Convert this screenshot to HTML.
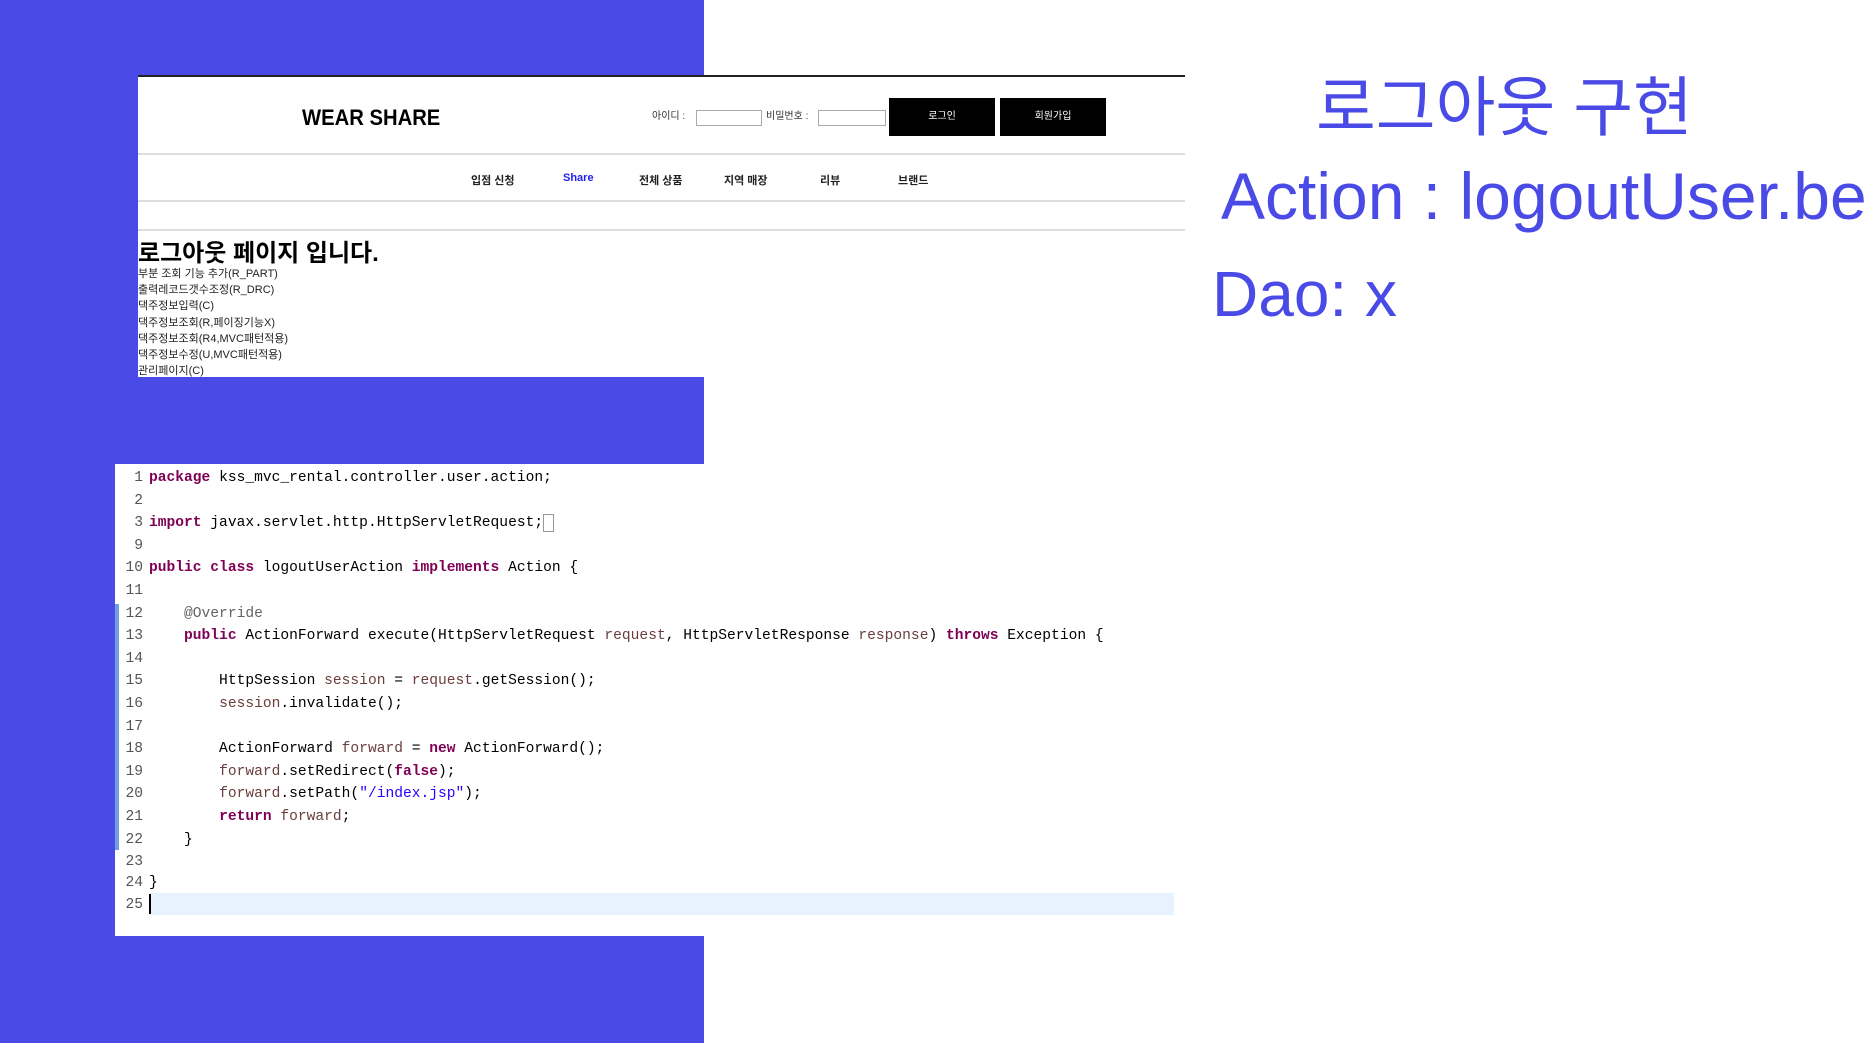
<!DOCTYPE html>
<html><head><meta charset="utf-8"><style>
body{margin:0;width:1865px;height:1043px;position:relative;background:#fff;overflow:hidden;font-family:"Liberation Sans","Noto Sans CJK KR",sans-serif}
.blue{position:absolute;left:0;top:0;width:704px;height:1043px;background:#4a4ae6}
.shot{position:absolute;left:138px;top:75px;width:1047px;height:300px;background:#fff;border-top:2px solid #222;overflow:hidden}
.abs{position:absolute;white-space:nowrap}
.hl{position:absolute;left:0;width:1047px;height:2px;background:#ddd}
.inp{position:absolute;top:33px;height:14px;border:1px solid #aaa;background:#fff}
.btn{position:absolute;top:21px;width:106px;height:38px;background:#000;color:#fff;font-size:10px;text-align:center;line-height:38px}
.nav{position:absolute;top:95px;font-size:11px;font-weight:bold;color:#222}
.li{position:absolute;left:0;font-size:11px;color:#222}
.code{position:absolute;left:115px;top:464px;width:1059px;height:472px;background:#fff;font-family:"Liberation Mono",monospace;font-size:14.6px}
.ln{position:absolute;left:0;width:28px;text-align:right;color:#555;white-space:pre}
.cl{position:absolute;left:34px;white-space:pre;color:#000}
.k{color:#7f0055;font-weight:bold}.v{color:#6a3e3e}.s{color:#2a00ff}.a{color:#646464}
.rt{position:absolute;color:#4a4ae6;white-space:nowrap}
</style></head><body>
<div class="blue"></div>
<div class="shot">
<div class="abs" style="left:164px;top:28px;font-size:22px;font-weight:bold;transform:scaleX(0.92);transform-origin:left">WEAR SHARE</div>
<div class="abs" style="left:514px;top:30px;font-size:10px;color:#333">아이디 :</div>
<div class="inp" style="left:558px;width:64px"></div>
<div class="abs" style="left:628px;top:30px;font-size:10px;color:#333">비밀번호 :</div>
<div class="inp" style="left:680px;width:66px"></div>
<div class="btn" style="left:751px">로그인</div>
<div class="btn" style="left:862px">회원가입</div>
<div class="hl" style="top:76px"></div>
<div class="nav" style="left:333px">입점 신청</div>
<div class="nav" style="left:425px;color:#2222ee">Share</div>
<div class="nav" style="left:501px">전체 상품</div>
<div class="nav" style="left:586px">지역 매장</div>
<div class="nav" style="left:682px">리뷰</div>
<div class="nav" style="left:760px">브랜드</div>
<div class="hl" style="top:123px"></div>
<div class="hl" style="top:152px"></div>
<div class="abs" style="left:0;top:156px;font-size:24px;font-weight:bold">로그아웃 페이지 입니다.</div>
<div class="li" style="top:188px">부분 조회 기능 추가(R_PART)</div>
<div class="li" style="top:204px">출력레코드갯수조정(R_DRC)</div>
<div class="li" style="top:220px">댁주정보입력(C)</div>
<div class="li" style="top:237px">댁주정보조회(R,페이징기능X)</div>
<div class="li" style="top:253px">댁주정보조회(R4,MVC패턴적용)</div>
<div class="li" style="top:269px">댁주정보수정(U,MVC패턴적용)</div>
<div class="li" style="top:285px">관리페이지(C)</div>
</div>
<div class="code">
<div style="position:absolute;left:0;top:140px;width:4px;height:246px;background:#6f9fe0"></div>
<div style="position:absolute;left:34px;top:429px;width:1025px;height:22px;background:#e8f2fe"></div>
<div style="position:absolute;left:34px;top:430px;width:2px;height:20px;background:#000"></div>
<div style="position:absolute;left:0;top:3px;width:1059px;height:460px">
<div class="ln" style="top:3px">1</div><div class="cl" style="top:3px"><span class="k">package</span> kss_mvc_rental.controller.user.action;</div>
<div class="ln" style="top:26px">2</div>
<div class="ln" style="top:48px">3</div><div class="cl" style="top:48px"><span class="k">import</span> javax.servlet.http.HttpServletRequest;<span style="border:1px solid #999">&nbsp;</span></div>
<div class="ln" style="top:71px">9</div>
<div class="ln" style="top:93px">10</div><div class="cl" style="top:93px"><span class="k">public class</span> logoutUserAction <span class="k">implements</span> Action {</div>
<div class="ln" style="top:116px">11</div>
<div class="ln" style="top:139px">12</div><div class="cl" style="top:139px">    <span class="a">@Override</span></div>
<div class="ln" style="top:161px">13</div><div class="cl" style="top:161px">    <span class="k">public</span> ActionForward execute(HttpServletRequest <span class="v">request</span>, HttpServletResponse <span class="v">response</span>) <span class="k">throws</span> Exception {</div>
<div class="ln" style="top:184px">14</div>
<div class="ln" style="top:206px">15</div><div class="cl" style="top:206px">        HttpSession <span class="v">session</span> = <span class="v">request</span>.getSession();</div>
<div class="ln" style="top:229px">16</div><div class="cl" style="top:229px">        <span class="v">session</span>.invalidate();</div>
<div class="ln" style="top:252px">17</div>
<div class="ln" style="top:274px">18</div><div class="cl" style="top:274px">        ActionForward <span class="v">forward</span> = <span class="k">new</span> ActionForward();</div>
<div class="ln" style="top:297px">19</div><div class="cl" style="top:297px">        <span class="v">forward</span>.setRedirect(<span class="k">false</span>);</div>
<div class="ln" style="top:319px">20</div><div class="cl" style="top:319px">        <span class="v">forward</span>.setPath(<span class="s">"/index.jsp"</span>);</div>
<div class="ln" style="top:342px">21</div><div class="cl" style="top:342px">        <span class="k">return</span> <span class="v">forward</span>;</div>
<div class="ln" style="top:365px">22</div><div class="cl" style="top:365px">    }</div>
<div class="ln" style="top:387px">23</div>
<div class="ln" style="top:408px">24</div><div class="cl" style="top:408px">}</div>
<div class="ln" style="top:430px">25</div>
</div>
</div>
<div class="rt" style="left:1316px;top:55px;font-size:65px">로그아웃 구현</div>
<div class="rt" style="left:1221px;top:158px;font-size:66px">Action : logoutUser.be</div>
<div class="rt" style="left:1212px;top:257px;font-size:64px">Dao: x</div>
</body></html>
